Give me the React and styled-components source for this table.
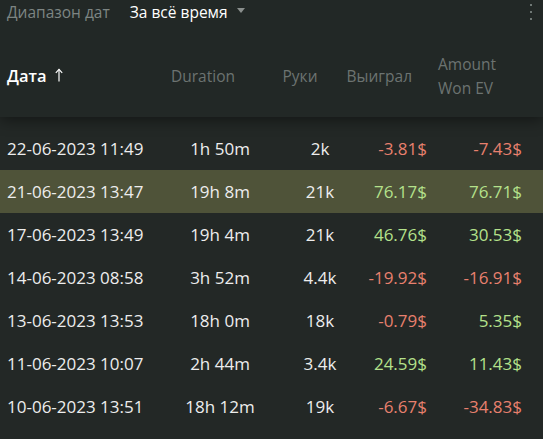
import React from "react";
import styled, { createGlobalStyle } from "styled-components";

const GlobalStyle = createGlobalStyle`
  html, body {
    margin: 0;
    padding: 0;
    background: #232826;
  }
  body {
    font-family: "Open Sans", "Noto Sans", sans-serif;
    color: #ececec;
  }
`;

const sessions = [
  { date: "22-06-2023 11:49", duration: "1h 50m", hands: "2k", won: -3.81, ev: -7.43 },
  { date: "21-06-2023 13:47", duration: "19h 8m", hands: "21k", won: 76.17, ev: 76.71, active: true },
  { date: "17-06-2023 13:49", duration: "19h 4m", hands: "21k", won: 46.76, ev: 30.53 },
  { date: "14-06-2023 08:58", duration: "3h 52m", hands: "4.4k", won: -19.92, ev: -16.91 },
  { date: "13-06-2023 13:53", duration: "18h 0m", hands: "18k", won: -0.79, ev: 5.35 },
  { date: "11-06-2023 10:07", duration: "2h 44m", hands: "3.4k", won: 24.59, ev: 11.43 },
  { date: "10-06-2023 13:51", duration: "18h 12m", hands: "19k", won: -6.67, ev: -34.83 },
];

const columns = "150px 126px 74px 70px 95px";

const Page = styled.div`
  width: 543px;
  min-height: 439px;
  background: #232826;
`;

const Head = styled.div`
  position: relative;
  z-index: 1;
  background: #222826;
  box-shadow: 0 3px 14px rgba(0, 0, 0, 0.45);
`;

const TopBar = styled.div`
  height: 24px;
  display: flex;
  align-items: center;
  padding: 0 7px;
  font-size: 15.5px;
`;

const RangeLabel = styled.span`
  color: #7d8583;
  margin-right: 20px;
`;

const RangeSelect = styled.button`
  display: flex;
  align-items: center;
  gap: 9px;
  padding: 0;
  border: 0;
  background: none;
  color: #ffffff;
  font: inherit;
  cursor: pointer;
`;

const Caret = styled.span`
  width: 0;
  height: 0;
  border-left: 4.5px solid transparent;
  border-right: 4.5px solid transparent;
  border-top: 5px solid #8a8f8d;
  margin-top: -3px;
`;

const MenuButton = styled.button`
  margin-left: auto;
  margin-right: 4px;
  display: flex;
  flex-direction: column;
  gap: 5px;
  padding: 2px 0;
  border: 0;
  background: none;
  cursor: pointer;

  span {
    width: 2px;
    height: 2px;
    border-radius: 50%;
    background: #8a9391;
  }
`;

const HeaderRow = styled.div`
  display: grid;
  grid-template-columns: ${columns};
  align-items: center;
  height: 83px;
  padding: 10px 21px 0 7px;
  font-size: 15.5px;
  color: #6c7371;
`;

const HeaderCell = styled.div`
  display: flex;
  justify-content: ${(p) => p.$justify || "flex-start"};
  padding-right: ${(p) => p.$pr || 0}px;
  line-height: 24px;
`;

const SortLabel = styled.span`
  display: flex;
  align-items: center;
  gap: 8px;
  color: #ffffff;
  font-size: 16.5px;
  font-weight: 600;

  svg {
    margin-top: -2px;
  }
`;

const Wrapped = styled.span`
  display: inline-block;
  max-width: 62px;
  text-align: left;
`;

const Body = styled.div`
  padding-top: 10px;
`;

const Row = styled.div`
  display: grid;
  grid-template-columns: ${columns};
  align-items: center;
  height: 43px;
  padding: 0 21px 0 7px;
  font-size: 17px;
  background: ${(p) => (p.$active ? "#4f5339" : "transparent")};
`;

const Cell = styled.div`
  text-align: ${(p) => p.$align || "left"};
  color: #ededed;
  white-space: nowrap;
`;

const Money = styled(Cell)`
  color: ${(p) => (p.$value < 0 ? "#e8806e" : "#b4e18b")};
`;

const money = (v) => `${v.toFixed(2)}$`;

const ArrowUp = () => (
  <svg width="8" height="14" viewBox="0 0 8 14" fill="none" stroke="#ffffff" strokeWidth="1.2">
    <path d="M4 1.5V13.5" />
    <path d="M0.8 4.8L4 1.4L7.2 4.8" />
  </svg>
);

export default function App() {
  return (
    <Page>
      <GlobalStyle />
      <Head>
        <TopBar>
          <RangeLabel>Диапазон дат</RangeLabel>
          <RangeSelect>
            За всё время
            <Caret />
          </RangeSelect>
          <MenuButton aria-label="menu">
            <span />
            <span />
            <span />
          </MenuButton>
        </TopBar>
        <HeaderRow>
          <HeaderCell>
            <SortLabel>
              Дата
              <ArrowUp />
            </SortLabel>
          </HeaderCell>
          <HeaderCell $justify="center" $pr={34}>Duration</HeaderCell>
          <HeaderCell $justify="center" $pr={40}>Руки</HeaderCell>
          <HeaderCell $justify="flex-end" $pr={15}>Выиграл</HeaderCell>
          <HeaderCell $justify="flex-end" $pr={22}>
            <Wrapped>Amount Won EV</Wrapped>
          </HeaderCell>
        </HeaderRow>
      </Head>
      <Body>
        {sessions.map((s) => (
          <Row key={s.date} $active={s.active}>
            <Cell>{s.date}</Cell>
            <Cell $align="center">{s.duration}</Cell>
            <Cell $align="center">{s.hands}</Cell>
            <Money $align="right" $value={s.won}>{money(s.won)}</Money>
            <Money $align="right" $value={s.ev}>{money(s.ev)}</Money>
          </Row>
        ))}
      </Body>
    </Page>
  );
}
